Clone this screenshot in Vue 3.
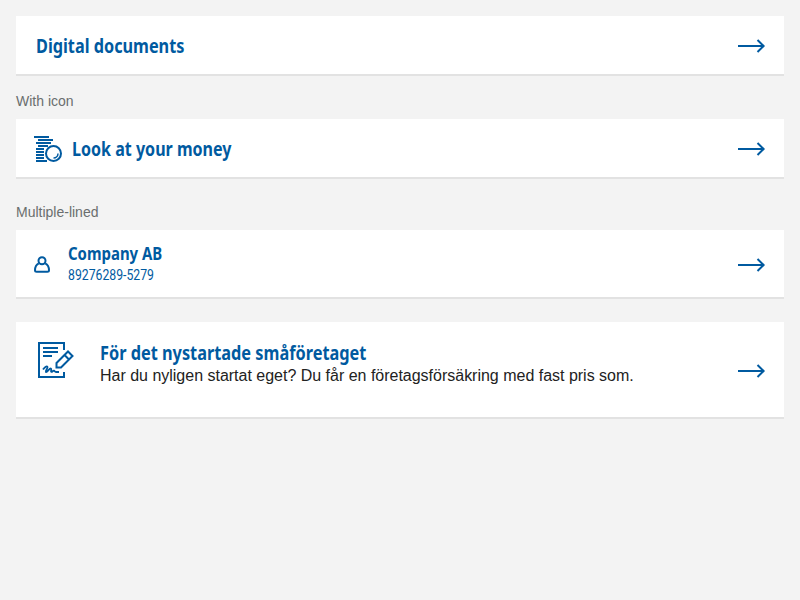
<script setup>
import { h } from 'vue'

const Arrow = () =>
  h('svg', { class: 'arrow', width: 28, height: 16, viewBox: '0 0 28 16', fill: 'none', stroke: '#005aa0', 'stroke-width': 2 }, [
    h('path', { d: 'M0 8h26M19.500 2L25.600 8l-6.100 6' }),
  ])
</script>

<template>
  <main class="page">
    <a class="card card-single">
      <span class="title t-documents">Digital documents</span>
      <Arrow />
    </a>

    <p class="label label-icon">With icon</p>
    <a class="card card-single card-money">
      <svg class="money-icon" width="30" height="28" viewBox="0 0 30 28" fill="none" stroke="#005aa0" stroke-width="2">
        <path d="M0 2h15M4 5h15M2 8h15M4 11h10M2 14h8M2 17h8M2 20h8M2 23h8M2 26h11" />
        <circle cx="19.500" cy="18.500" r="7.500" />
        <path d="M24 18.500a4.500 4.500 0 0 1-4.500 4.500" stroke-width="1.500" />
      </svg>
      <span class="title t-money">Look at your money</span>
      <Arrow />
    </a>

    <p class="label label-lines">Multiple-lined</p>
    <a class="card card-company">
      <svg class="person-icon" width="18" height="18" viewBox="0 0 18 18" fill="none" stroke="#005aa0" stroke-width="2">
        <circle cx="8" cy="4.700" r="3.500" />
        <path d="M4.800 7.300C2.300 8.500 1 11 1 14.300c0 1 .6 1.500 1.700 1.500h10.600c1.100 0 1.700-.5 1.700-1.500 0-3.300-1.300-5.800-3.800-7" stroke-linejoin="round" />
      </svg>
      <span class="copy">
        <span class="title t-company">Company AB</span>
        <span class="number">89276289-5279</span>
      </span>
      <Arrow />
    </a>

    <a class="card card-startup">
      <svg class="sign-icon" width="38" height="38" viewBox="0 0 38 38" fill="none" stroke="#005aa0" stroke-width="2">
        <path d="M26 9V2H1v34h25v-5M5 7h15M5 11h15M5 15h9" />
        <path d="M5 28.500c1.500-2.200 3.500-3.800 4.400-2.800 1.100 1.300-2.600 4.300-1.500 5.300 1.200 1 3.400-4 5-3.500 1.300.5-.6 2.600.3 3.300 1 .6 1.700-1.500 2.800-1.200.9.400.7 1.400 2 1.400h3" stroke-width="1.800" />
        <path d="M18.500 26.500v-4.500L30 10.500l4.500 4.500L23 26.500zM26.500 14l4.500 4.500" />
      </svg>
      <span class="copy">
        <span class="title t-startup">För det nystartade småföretaget</span>
        <span class="description">Har du nyligen startat eget? Du får en företagsförsäkring med fast pris som.</span>
      </span>
      <Arrow />
    </a>
  </main>
</template>

<style>
body {
  background: #f3f3f3;
}
</style>

<style scoped>
.page {
  padding: 16px;
  font-family: 'Liberation Sans', Arial, sans-serif;
}
.card {
  display: flex;
  align-items: center;
  box-sizing: border-box;
  background: #fff;
  border-bottom: 2px solid #e2e2e2;
  padding: 2px 18px 0 20px;
}
.card-single {
  height: 60px;
}
.card-money {
  padding-left: 18px;
}
.card-company {
  height: 69px;
  padding-left: 18px;
}
.card-startup {
  height: 97px;
  margin-top: 23px;
}
.label {
  margin: 0;
  font-size: 14px;
  line-height: 16px;
  color: #6a6e6e;
}
.label-icon {
  padding: 17px 0 10px;
}
.label-lines {
  padding: 25px 0 10px;
}
.title {
  display: block;
  font-family: 'Noto Sans', sans-serif;
  font-weight: 700;
  font-size: 19px;
  line-height: 24px;
  color: #005aa0;
  white-space: nowrap;
  transform-origin: left center;
  transform: scaleX(0.855);
}
.t-money {
  transform: scaleX(0.845);
}
.t-company {
  font-size: 18px;
  line-height: 22px;
  padding-bottom: 2px;
  transform: scaleX(0.83);
}
.t-startup {
  line-height: 22px;
  padding-bottom: 2px;
  transform: scaleX(0.858);
}
.arrow {
  flex: none;
  margin-left: auto;
}
.money-icon {
  flex: none;
  margin-right: 8px;
}
.person-icon {
  flex: none;
  margin-right: 16px;
}
.sign-icon {
  flex: none;
  margin: 0 24px 22px 2px;
}
.copy {
  display: flex;
  flex-direction: column;
  align-items: flex-start;
}
.card-company .copy {
  padding-bottom: 4px;
}
.number {
  font-family: Roboto, sans-serif;
  font-size: 14px;
  line-height: 18px;
  color: #005aa0;
  transform-origin: left center;
  transform: scaleX(0.875);
}
.card-startup .copy {
  padding-bottom: 14px;
}
.description {
  font-size: 16px;
  line-height: 20px;
  letter-spacing: -0.010px;
  color: #222;
  white-space: nowrap;
}
</style>
